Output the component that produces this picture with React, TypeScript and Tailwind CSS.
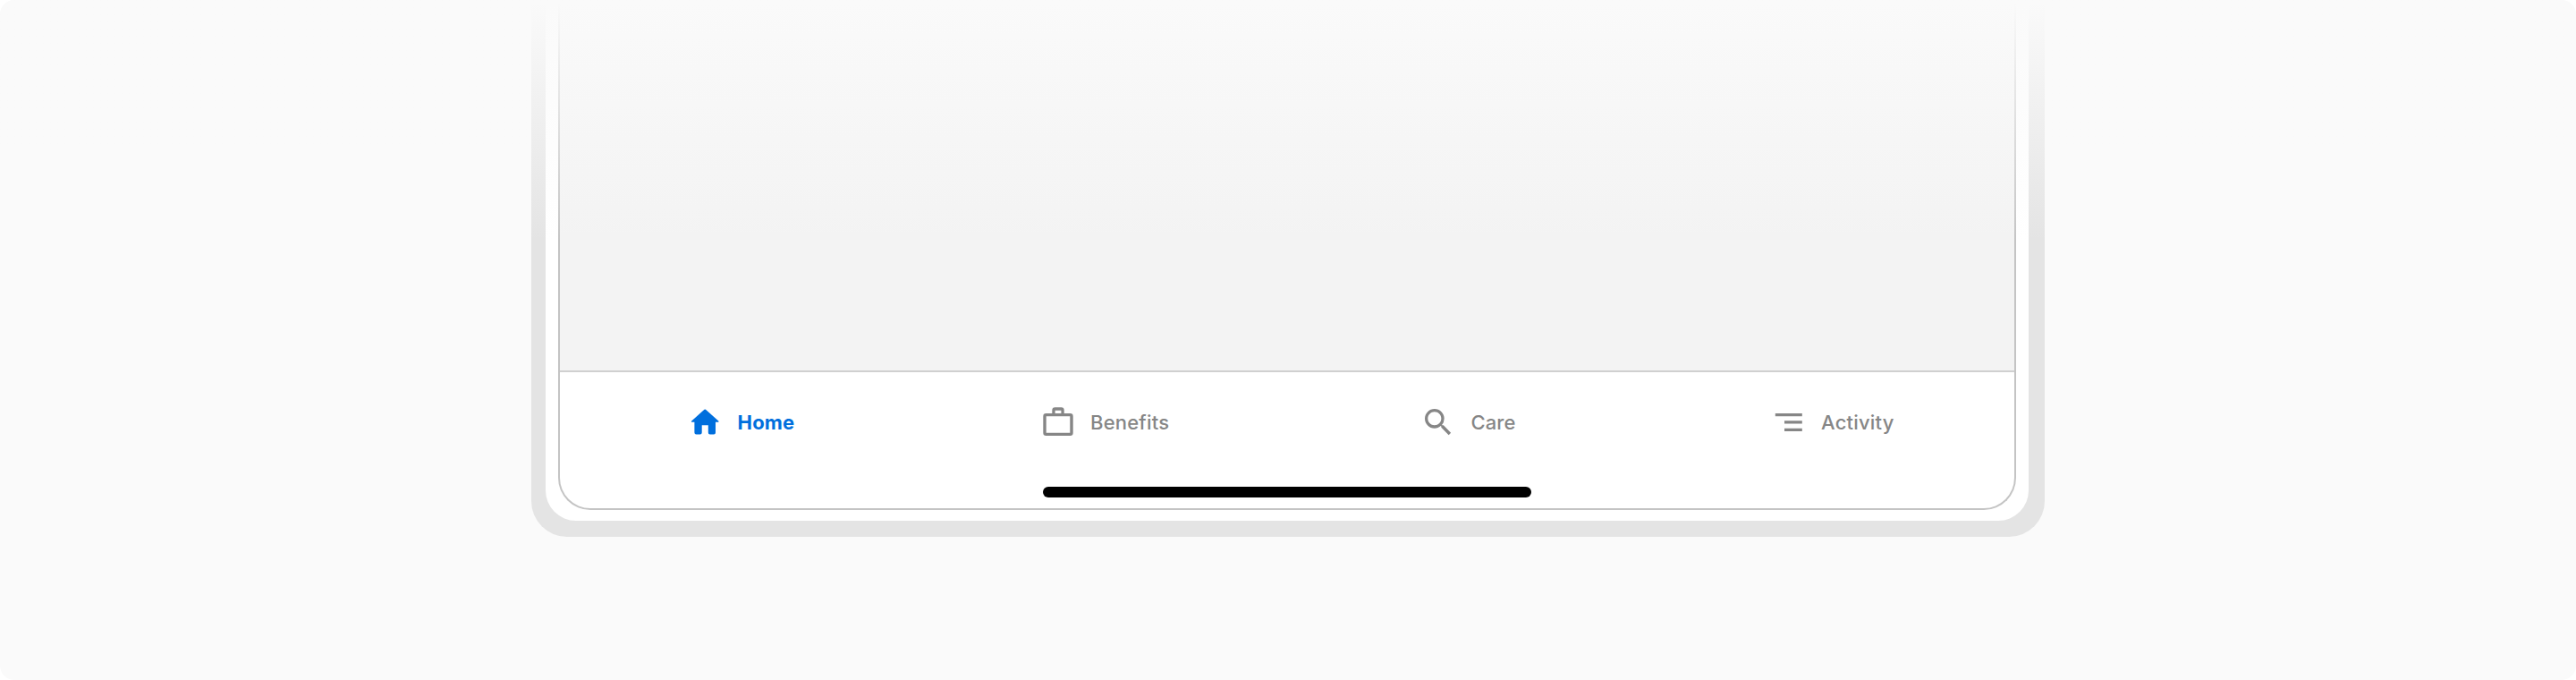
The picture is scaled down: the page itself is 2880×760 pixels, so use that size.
import type { ReactNode } from "react";

function Icon({ children }: { children: ReactNode }) {
  return (
    <svg viewBox="0 0 40 40" className="size-10 shrink-0" fill="none" aria-hidden="true">
      {children}
    </svg>
  );
}

const tabs: { label: string; className: string; labelClass: string; icon: ReactNode }[] = [
  {
    label: "Home",
    className: "pl-[142px] text-[#006fdd]",
    labelClass: "ml-[16.5px] font-bold tracking-[0.2px]",
    icon: (
      <path
        fill="currentColor"
        d="M19.4 5.8a1.3 1.3 0 0 1 1.600 0L35 18.300c1 .9.700 1.500-.5 1.500H32V31.500a2 2 0 0 1-2 2H25.800a2 2 0 0 1-2-2V23.200H16.700V31.500a2 2 0 0 1-2 2H10.400a2 2 0 0 1-2-2V19.800H6c-1.200 0-1.500-.6-.5-1.500Z"
      />
    ),
  },
  {
    label: "Benefits",
    className: "pl-[130px] text-[#868686]",
    labelClass: "ml-[16.5px] font-[450] tracking-[0.2px]",
    icon: (
      <path
        fill="currentColor"
        fillRule="evenodd"
        d="M13.300 10V6.700a3.300 3.300 0 0 1 3.300-3.400h6.700a3.300 3.300 0 0 1 3.400 3.400V10h6.600a3.300 3.300 0 0 1 3.400 3.300v18.400a3.300 3.300 0 0 1-3.400 3.300H6.700a3.300 3.300 0 0 1-3.400-3.300V13.300A3.300 3.300 0 0 1 6.700 10ZM16.600 10h6.800V6.700h-6.800ZM6.700 13.300v18.400h26.600V13.300Z"
      />
    ),
  },
  {
    label: "Care",
    className: "pl-[149px] text-[#868686]",
    labelClass: "ml-[16.5px] font-[450] tracking-[0.1px]",
    icon: (
      <path
        transform="scale(1.66667)"
        fill="currentColor"
        d="M15.500 14h-.79l-.28-.27A6.471 6.471 0 0 0 16 9.500 6.500 6.500 0 1 0 9.500 16c1.610 0 3.090-.59 4.230-1.570l.27.28v.79l5 4.990L20.490 19l-4.990-5Zm-6 0C7.010 14 5 11.990 5 9.500S7.010 5 9.500 5 14 7.010 14 9.500 11.990 14 9.500 14Z"
      />
    ),
  },
  {
    label: "Activity",
    className: "pl-[134px] text-[#868686]",
    labelClass: "ml-[16.5px] font-[450] tracking-[0.2px]",
    icon: <path fill="currentColor" d="M4.800 10h30v3.300h-30zM15 18.300h19.800v3.300H15zM15 26.700h19.800V30H15z" />,
  },
];

export default function App() {
  return (
    <div className="h-[760px] w-[2880px] bg-white font-[Inter,sans-serif]">
      <main className="relative h-full overflow-hidden rounded-[16px] bg-[#fafafa] pl-[594px]">
        <div className="h-[600px] w-[1692px] rounded-b-[40px] bg-[#e4e4e4] pr-[18px] pb-[18px] pl-4">
          <div className="h-full rounded-b-[34px] bg-white pr-[14px] pb-3 pl-[14px]">
            <section className="flex h-full flex-col overflow-hidden rounded-b-[36px] border-x-2 border-b-2 border-[#c4c4c4] bg-white">
              <div className="h-[416px] shrink-0 border-b-2 border-[#d0d0d0] bg-[#f3f3f3]" />
              <nav className="grid h-[112px] shrink-0 grid-cols-4">
                {tabs.map((tab) => (
                  <button
                    key={tab.label}
                    className={`flex h-[112px] items-center text-[22px] leading-7 whitespace-nowrap ${tab.className}`}
                  >
                    <Icon>{tab.icon}</Icon>
                    <span className={tab.labelClass}>{tab.label}</span>
                  </button>
                ))}
              </nav>
              <div className="mx-auto mt-4 h-3 w-[546px] shrink-0 rounded-full bg-black" />
            </section>
          </div>
        </div>
        <div className="pointer-events-none absolute inset-x-0 top-0 h-[270px] bg-linear-to-b from-[#fafafa] from-[1%] to-[#fafafa]/0" />
      </main>
    </div>
  );
}
